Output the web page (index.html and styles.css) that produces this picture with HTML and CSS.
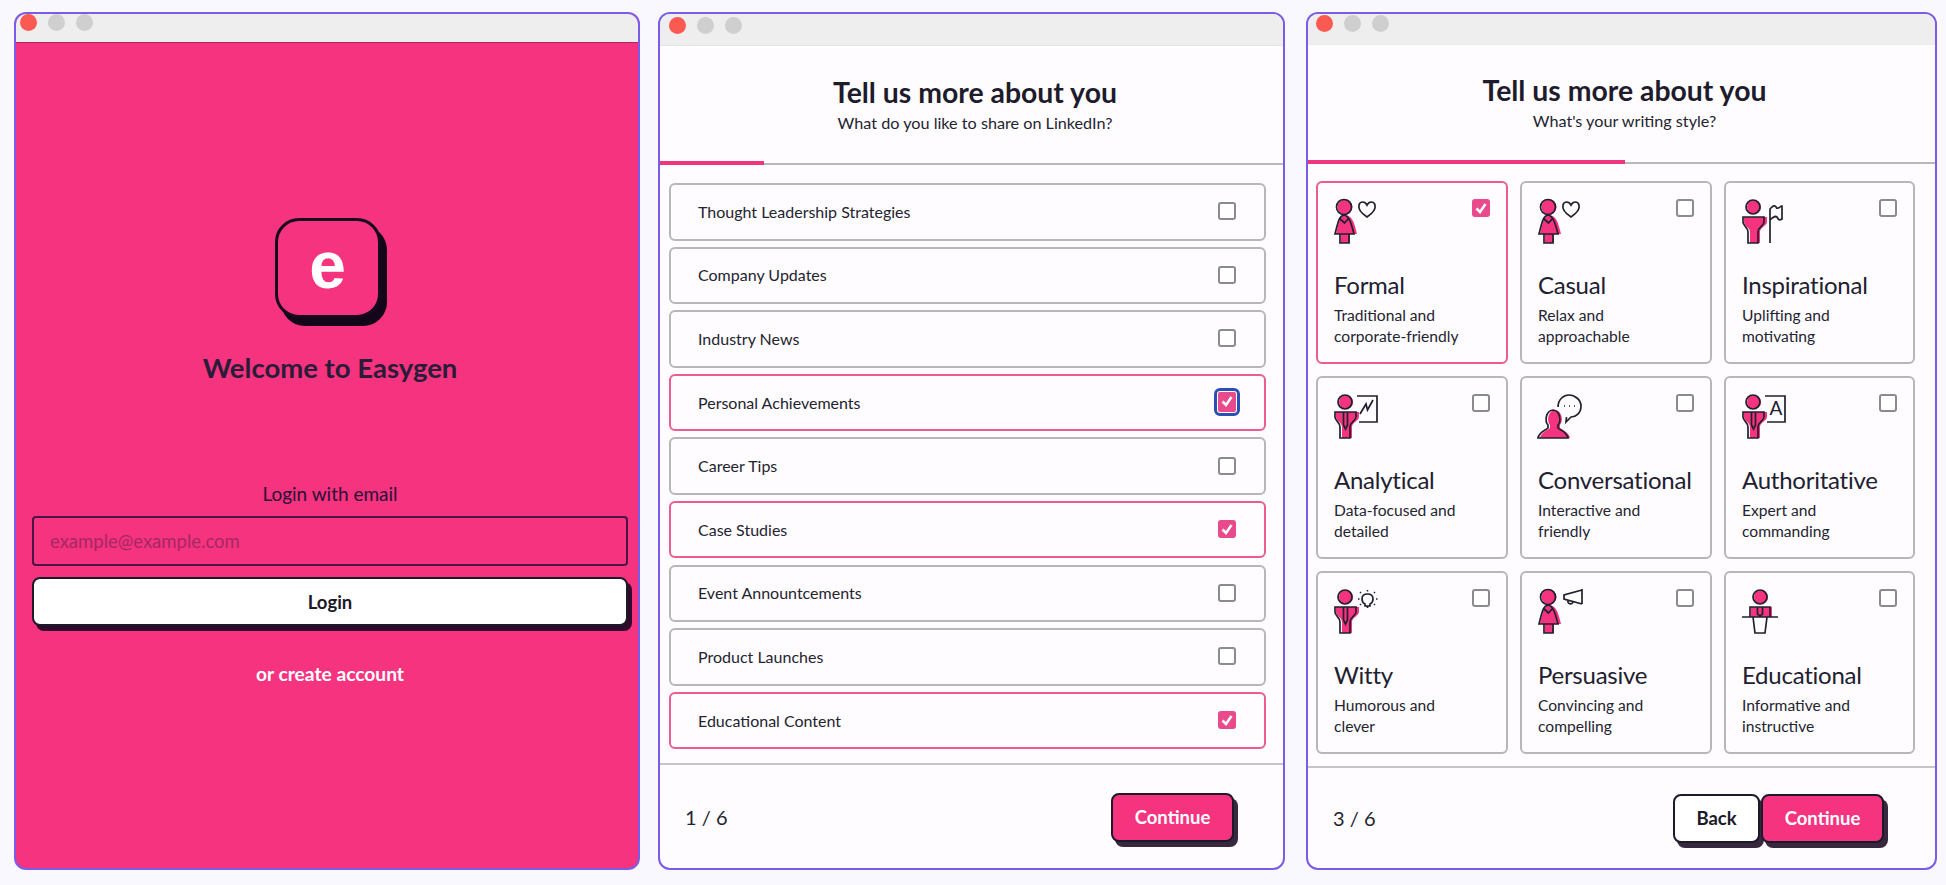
FILE: index.html
```html
<!DOCTYPE html>
<html lang="en">
<head>
<meta charset="utf-8">
<title>Easygen onboarding</title>
<link rel="stylesheet" href="styles.css">
</head>
<body>
<svg class="defs" width="0" height="0" aria-hidden="true">
  <symbol id="woman" overflow="visible">
    <circle class="pk" cx="11" cy="8" r="7.5"/>
    <path class="pk" d="M11 16C6 17 5 22 2 35H7V44H16V35H23C20 22 18 17 11 16Z"/>
    <circle class="ln" cx="10" cy="8" r="7.5"/>
    <path class="ln" d="M10 16C5 17 4 23 1 35H20C17 23 15 17 10 16ZM5 19L10.5 24L15 19M6 35V44H15V35"/>
  </symbol>
  <symbol id="man" overflow="visible">
    <circle class="pk" cx="12" cy="8" r="7"/>
    <path class="pk" d="M2 18H25V23C25 27 18 28 18 33V44H8V33C8 28 2 27 2 23Z"/>
    <circle class="ln" cx="11" cy="8" r="7"/>
    <path class="ln" d="M1 18H22V23C22 27 16 28 16 33V44H6V33C6 28 1 27 1 23Z"/>
  </symbol>
  <symbol id="tie" overflow="visible">
    <path class="ln" d="M9.5 18V31L11.5 35L13.5 31V18"/>
  </symbol>
</svg>
<main class="stage">
  <section class="window window-login">
    <div class="titlebar titlebar-login"><i class="dot red"></i><i class="dot"></i><i class="dot"></i></div>
    <div class="login">
      <div class="logo">e</div>
      <h1 class="welcome">Welcome to Easygen</h1>
      <label class="login-label" for="email">Login with email</label>
      <input class="email" id="email" type="text" placeholder="example@example.com">
      <button class="btn btn-login" type="button">Login</button>
      <a class="create">or create account</a>
    </div>
  </section>

  <section class="window window-topics">
    <div class="titlebar titlebar-topics"><i class="dot red"></i><i class="dot"></i><i class="dot"></i></div>
    <header class="head head-topics">
      <h2 class="title">Tell us more about you</h2>
      <p class="subtitle">What do you like to share on LinkedIn?</p>
    </header>
    <div class="track"><div class="fill" style="width:16.7%"></div></div>
    <div class="rows">
      <div class="row"><span>Thought Leadership Strategies</span><i class="check"></i></div>
      <div class="row"><span>Company Updates</span><i class="check"></i></div>
      <div class="row"><span>Industry News</span><i class="check"></i></div>
      <div class="row on"><span>Personal Achievements</span><i class="check checked focus"><svg viewBox="0 0 18 18"><path class="tick" d="M4.5 9.5L8 13L13.5 5"/></svg></i></div>
      <div class="row"><span>Career Tips</span><i class="check"></i></div>
      <div class="row on"><span>Case Studies</span><i class="check checked"><svg viewBox="0 0 18 18"><path class="tick" d="M4.5 9.5L8 13L13.5 5"/></svg></i></div>
      <div class="row"><span>Event Annountcements</span><i class="check"></i></div>
      <div class="row"><span>Product Launches</span><i class="check"></i></div>
      <div class="row on"><span>Educational Content</span><i class="check checked"><svg viewBox="0 0 18 18"><path class="tick" d="M4.5 9.5L8 13L13.5 5"/></svg></i></div>
    </div>
    <footer class="foot foot-topics">
      <span class="pager">1 / 6</span>
      <div class="actions"><button class="btn btn-primary" type="button">Continue</button></div>
    </footer>
  </section>

  <section class="window window-style">
    <div class="titlebar titlebar-style"><i class="dot red"></i><i class="dot"></i><i class="dot"></i></div>
    <header class="head head-style">
      <h2 class="title">Tell us more about you</h2>
      <p class="subtitle">What's your writing style?</p>
    </header>
    <div class="track"><div class="fill" style="width:50.5%"></div></div>
    <div class="cards">
      <article class="card on">
        <i class="check checked card-check"><svg viewBox="0 0 18 18"><path class="tick" d="M4.5 9.5L8 13L13.5 5"/></svg></i>
        <svg class="icon" viewBox="0 0 50 46"><use href="#woman"/><path class="ln" d="M33 18C27 14 24 10 25 6C26 2 31 2 33 6C35 2 40 2 41 6C42 10 39 14 33 18Z"/></svg>
        <h3>Formal</h3><p>Traditional and<br>corporate-friendly</p>
      </article>
      <article class="card">
        <i class="check card-check"></i>
        <svg class="icon" viewBox="0 0 50 46"><use href="#woman"/><path class="ln" d="M33 18C27 14 24 10 25 6C26 2 31 2 33 6C35 2 40 2 41 6C42 10 39 14 33 18Z"/></svg>
        <h3>Casual</h3><p>Relax and<br>approachable</p>
      </article>
      <article class="card">
        <i class="check card-check"></i>
        <svg class="icon" viewBox="0 0 50 46"><use href="#man"/><path class="ln" d="M28 44V10C30 8 31 6 33 7C35 8 34 10 36 9C38 9 38 7 40 7V20C37 22 36 20 35 18C34 17 31 18 28 21"/></svg>
        <h3>Inspirational</h3><p>Uplifting and<br>motivating</p>
      </article>
      <article class="card">
        <i class="check card-check"></i>
        <svg class="icon" viewBox="0 0 50 46"><use href="#man"/><use href="#tie"/><path class="ln" d="M23 2H43V28H25M26 20L32 10L33.500 16L39 6"/></svg>
        <h3>Analytical</h3><p>Data-focused and<br>detailed</p>
      </article>
      <article class="card">
        <i class="check card-check"></i>
        <svg class="icon" viewBox="0 0 50 46">
          <path class="pk" d="M2 44C3 38 10 36 12 34V31C9 28 9 17 17 16C25 17 25 28 22 31V34C24 36 31 38 32 44Z"/>
          <path class="ln" d="M0 44C1 38 8 36 10 34V31C7 28 7 17 15 16C23 17 23 28 20 31V34C22 36 29 38 30 44Z"/>
          <path class="ln" d="M20 13C20 5 26 1 31 1C37 1 43 6 43 12C43 19 38 23 33 23L28 28L28.500 23"/>
          <path class="dots" d="M26 12H27M31 12H32M36 12H37"/>
        </svg>
        <h3>Conversational</h3><p>Interactive and<br>friendly</p>
      </article>
      <article class="card">
        <i class="check card-check"></i>
        <svg class="icon" viewBox="0 0 50 46"><use href="#man"/><use href="#tie"/><path class="ln" d="M23 2H43V28H25"/><text class="board-a" x="27.500" y="21">A</text></svg>
        <h3>Authoritative</h3><p>Expert and<br>commanding</p>
      </article>
      <article class="card">
        <i class="check card-check"></i>
        <svg class="icon" viewBox="0 0 50 46"><use href="#man"/><use href="#tie"/><path class="ln" d="M31 17V15C29 14 28 12 28 10C28 7 30 5 33.500 5C37 5 39 7 39 10C39 12 38 14 36 15V17ZM33.500 17V19"/><path class="dots" d="M33.500 1V2.500M26 3L27 4M41 3L40 4M24 10H25.500M42 10H43.500M26 16L27 15M41 16L40 15"/></svg>
        <h3>Witty</h3><p>Humorous and<br>clever</p>
      </article>
      <article class="card">
        <i class="check card-check"></i>
        <svg class="icon" viewBox="0 0 50 46"><use href="#woman"/><path class="ln" d="M44 0V15M44 1L26 6V10L44 15M30 11.500C29 15 34 16 35 13"/></svg>
        <h3>Persuasive</h3><p>Convincing and<br>compelling</p>
      </article>
      <article class="card">
        <i class="check card-check"></i>
        <svg class="icon" viewBox="0 0 50 46">
          <circle class="pk" cx="19" cy="8" r="7"/><rect class="pk" x="9" y="18" width="21" height="10"/>
          <circle class="ln" cx="18" cy="8" r="7"/>
          <path class="ln" d="M8 28V18H28V28M15.500 18V25L18 27L20.500 25V18M0 28H36M11 28L13 44H23L25 28"/>
        </svg>
        <h3>Educational</h3><p>Informative and<br>instructive</p>
      </article>
    </div>
    <footer class="foot foot-style">
      <span class="pager">3 / 6</span>
      <div class="actions">
        <button class="btn btn-back" type="button">Back</button>
        <button class="btn btn-primary" type="button">Continue</button>
      </div>
    </footer>
  </section>
</main>
</body>
</html>
```
FILE: styles.css
```css
* { box-sizing: border-box; }
html, body { margin: 0; height: 100%; }
body { background: #f9f8fe; color: #20202f; font-family: "Lato", "Open Sans", sans-serif; overflow: hidden; }
.defs { position: absolute; }

.stage { display: flex; padding: 12px 0 0 14px; height: 885px; }
.window { display: flex; flex-direction: column; height: 858px; background: #fefcff; border: 2px solid #7b5ce6; border-radius: 12px; overflow: hidden; }
.window-login { width: 626px; margin-right: 18px; background: #f6337f; }
.window-topics { width: 627px; margin-right: 21px; }
.window-style { width: 631px; }

.titlebar { display: flex; gap: 11px; flex: none; background: #efeeef; }
.titlebar-login { height: 29px; padding: 0 0 0 4px; border-bottom: 1px solid #b2245f; }
.titlebar-topics { height: 32px; padding: 3px 0 0 9px; border-bottom: 1px solid #e4e4e4; }
.titlebar-style { height: 31px; padding: 1px 0 0 8px; border-bottom: 1px solid #ececec; }
.dot { width: 17px; height: 17px; border-radius: 50%; background: #cfcfcf; }
.dot.red { background: #fb5a52; }

.login { display: flex; flex-direction: column; align-items: center; padding: 175px 10px 0 16px; }
.logo { width: 106px; height: 100px; margin-right: 5px; display: flex; align-items: center; justify-content: center; padding-bottom: 7px; background: #f6337f; border: 3px solid #170a1c; border-radius: 24px; box-shadow: 6px 8px 0 #14061a; color: #fff; font: 700 66px/1 "Liberation Sans", sans-serif; }
.welcome { margin: 31px 0 0; font-size: 27.500px; line-height: 38px; font-weight: 700; color: #2a1c38; }
.login-label { margin-top: 95px; font-size: 19px; line-height: 24px; color: #2a1035; }
.email { width: 100%; height: 50px; margin-top: 10px; padding: 0 16px; background: transparent; border: 2px solid #4a1546; border-radius: 4px; font: 400 18.500px "Lato", sans-serif; outline: none; }
.email::placeholder { color: #a62763; opacity: 1; }
.btn { height: 49px; border: 2px solid #1c1a2a; border-radius: 8px; font: 700 18.500px "Lato", sans-serif; padding: 0; }
.btn-login { width: 100%; margin-top: 11px; background: #fff; color: #1c1a2a; box-shadow: 4px 5px 0 #300a2c; }
.create { margin-top: 36px; font-size: 19.200px; line-height: 24px; font-weight: 700; color: #fff; }

.head { flex: none; text-align: center; }
.head-topics { height: 115px; padding: 27px 0 0 7px; }
.head-style { height: 115px; padding: 26px 0 0 6px; }
.title { margin: 0; font-size: 28.400px; line-height: 38px; font-weight: 700; color: #1e1c2c; }
.subtitle { margin: 0; font-size: 16.200px; line-height: 24px; color: #24242f; }
.track { flex: none; height: 4px; background: linear-gradient(transparent 2px, #b9b9b9 2px); }
.fill { height: 4px; background: #f0357f; }

.rows { display: flex; flex-direction: column; gap: 6.100px; padding: 18px 17px 14px 9px; border-bottom: 2px solid #c6c6c6; }
.row { display: flex; align-items: center; justify-content: space-between; height: 57.500px; padding: 0 28px 1px 27px; border: 2px solid #b7b7b7; border-radius: 6px; font-size: 16px; color: #24242f; }
.row.on, .card.on { border-color: #ec5c92; }

.check { display: block; flex: none; width: 18px; height: 18px; background: #fff; border: 2px solid #8a8a8f; border-radius: 3px; }
.check svg { display: block; width: 18px; height: 18px; }
.check.checked { border: 0; background: #e94a8c; }
.check.focus { width: 18px; height: 20px; outline: 3px solid #2b4fb5; outline-offset: 1px; border-radius: 2px; }
.tick { fill: none; stroke: #fff; stroke-width: 2.5; }

.foot { flex: 1; display: flex; align-items: center; justify-content: space-between; }
.foot-topics { padding: 1px 49px 0 25px; }
.foot-style { padding: 0 51px 0 25px; }
.pager { font-size: 20px; color: #24242f; }
.actions { display: flex; gap: 1px; }
.btn-primary { width: 123px; background: #f6337f; color: #fff; box-shadow: 4px 5px 0 #38283f; }
.btn-back { width: 87px; background: #fff; color: #1c1a2a; box-shadow: 4px 5px 0 #38283f; }

.cards { display: grid; grid-template-columns: 192px 192px 191px; grid-auto-rows: 183px; gap: 12px; padding: 17px 0 12px 8px; border-bottom: 2px solid #c6c6c6; }
.card { position: relative; padding: 16px 0 0 16px; border: 2px solid #b7b7b7; border-radius: 6px; }
.card-check { position: absolute; top: 16px; right: 16px; }
.icon { display: block; width: 50px; height: 46px; overflow: visible; }
.card h3 { margin: 23.500px 0 0; font-size: 24px; letter-spacing: -.25px; line-height: 32px; font-weight: 400; color: #20202f; }
.card p { margin: 4px 0 0; font-size: 15.600px; line-height: 21px; color: #24242f; }

.pk { fill: #f6337f; stroke: none; }
.ln { fill: none; stroke: #20202f; stroke-width: 1.7; }
.dots { fill: none; stroke: #20202f; stroke-width: 1.5; }
.board-a { font: 400 19px "Lato", sans-serif; fill: #20202f; }
```
